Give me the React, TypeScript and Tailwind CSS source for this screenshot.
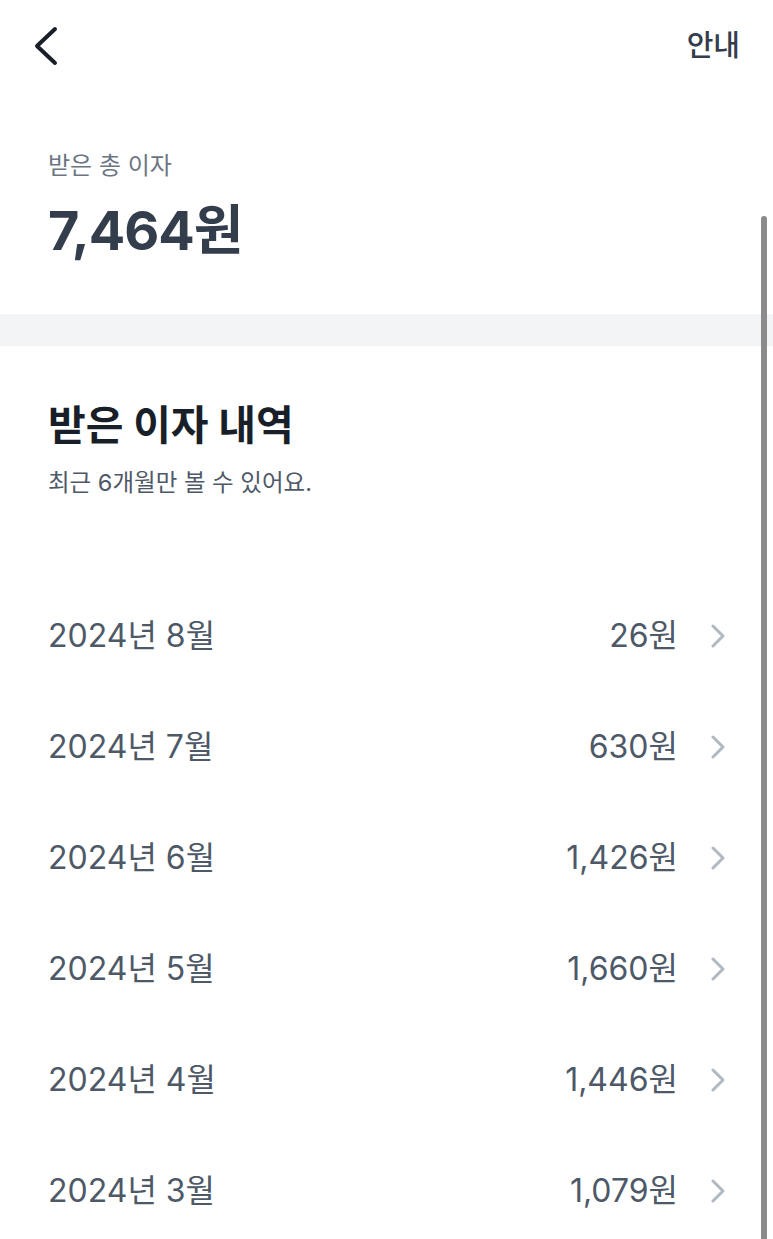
interface Row {
  month: string;
  amount: string;
}

const rows: Row[] = [
  { month: '2024년 8월', amount: '26원' },
  { month: '2024년 7월', amount: '630원' },
  { month: '2024년 6월', amount: '1,426원' },
  { month: '2024년 5월', amount: '1,660원' },
  { month: '2024년 4월', amount: '1,446원' },
  { month: '2024년 3월', amount: '1,079원' },
];

const font = { fontFamily: 'Inter, "Noto Sans CJK KR", "Noto Sans", sans-serif' };

const App = () => {
  return (
    <div className="relative min-h-[1239px] w-full overflow-hidden bg-white" style={font}>
      {/* Top bar */}
      <header className="flex h-[92px] items-center justify-between pl-[33px] pr-[33px]">
        <button aria-label="뒤로" className="flex h-[40px] w-[26px] items-center justify-center">
          <svg width="26" height="40" viewBox="0 0 26 40" fill="none">
            <path d="M22 3 L4 20 L22 37" stroke="#191f28" strokeWidth="4" strokeLinecap="round" strokeLinejoin="round" />
          </svg>
        </button>
        <span className="text-[29px] font-medium text-[#333d4b]">안내</span>
      </header>

      {/* Total */}
      <section className="px-[48px] pt-[58px] pb-[51px]">
        <p className="text-[24px] leading-[32px] text-[#6b7684]">받은 총 이자</p>
        <p className="mt-[17px] text-[54px] font-bold leading-[64px] tracking-[-1px] text-[#333d4b]">7,464원</p>
      </section>

      <div className="h-[32px] bg-[#f2f4f6]" />

      {/* History */}
      <section className="px-[48px] pt-[53px]">
        <h2 className="text-[41px] font-bold leading-[52px] text-[#191f28]">받은 이자 내역</h2>
        <p className="mt-[17px] text-[23.5px] leading-[30px] text-[#4e5968]">최근 6개월만 볼 수 있어요.</p>
      </section>

      <ul className="mt-[82px]">
        {rows.map((row) => (
          <li key={row.month} className="flex h-[111px] items-center justify-between pl-[48px] pr-[47px]">
            <span className="text-[32px] text-[#4e5968]">{row.month}</span>
            <span className="flex items-center gap-[32px]">
              <span className="text-[32px] text-[#4e5968]">{row.amount}</span>
              <svg width="16" height="24" viewBox="0 0 16 24" fill="none">
                <path d="M3 2 L13 12 L3 22" stroke="#b0b8c1" strokeWidth="3" strokeLinecap="round" strokeLinejoin="round" />
              </svg>
            </span>
          </li>
        ))}
      </ul>

      {/* Overlay scrollbar */}
      <div className="absolute right-[6px] top-[216px] h-[1030px] w-[6px] rounded-full bg-[#8b8b8b]" />
    </div>
  );
};

export default App;
